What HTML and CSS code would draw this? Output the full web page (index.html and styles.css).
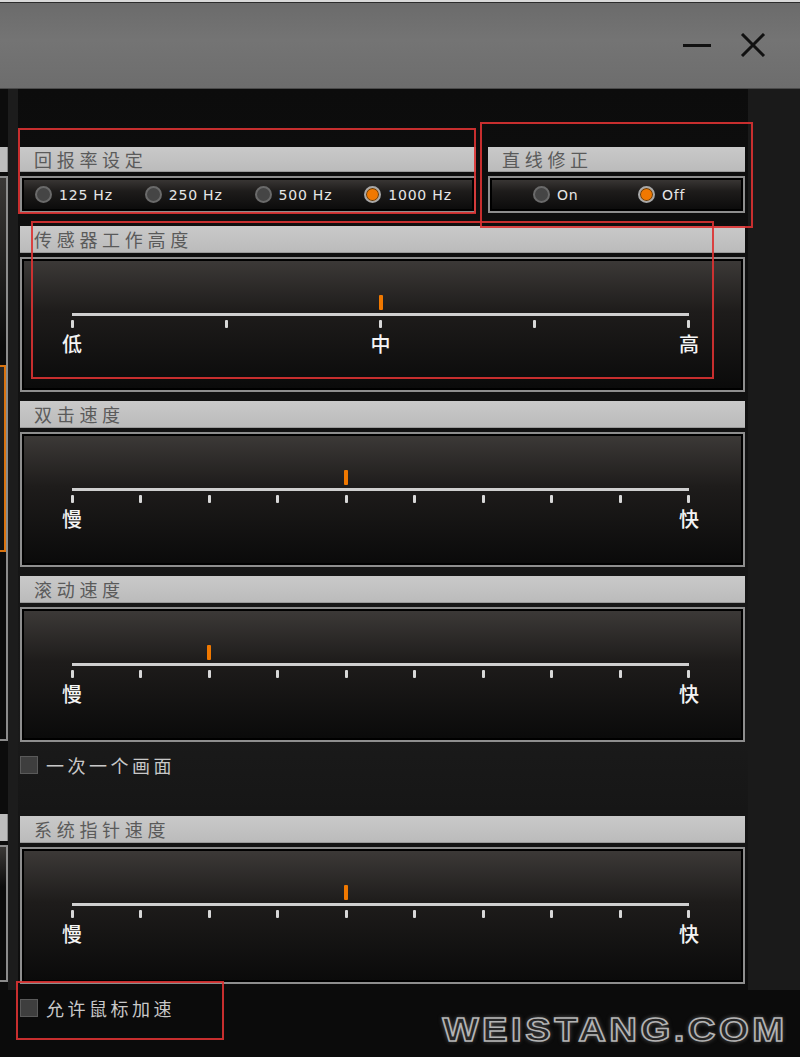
FILE: index.html
```html
<!DOCTYPE html>
<html lang="zh">
<head>
<meta charset="utf-8">
<title>Mouse settings</title>
<link rel="stylesheet" href="styles.css">
</head>
<body>
<div class="titlebar">
  <svg class="btn-min" width="28" height="4" viewBox="0 0 28 4"><rect x="0" y="0" width="28" height="3" fill="#111"/></svg>
  <svg class="btn-close" width="26" height="24" viewBox="0 0 26 24"><path d="M2 1 L24 23 M24 1 L2 23" stroke="#111" stroke-width="3" fill="none"/></svg>
</div>

<div class="main">
  <div class="leftcol">
    <div class="lc-hd"></div>
    <div class="lc-body">
      <div class="lc-sel"></div>
    </div>
    <div class="lc-hd lc-hd2"></div>
    <div class="lc-body lc-body2"></div>
  </div>
  <div class="divider"></div>
  <div class="content">
    <div class="row1">
      <div class="panel panel-rate">
        <div class="hd hd-short">回报率设定</div>
        <div class="bd bd-radio">
          <label class="radio"><span class="dot"></span>125 Hz</label>
          <label class="radio"><span class="dot"></span>250 Hz</label>
          <label class="radio"><span class="dot"></span>500 Hz</label>
          <label class="radio"><span class="dot on"></span>1000 Hz</label>
        </div>
      </div>
      <div class="panel panel-line">
        <div class="hd hd-short">直线修正</div>
        <div class="bd bd-radio bd-radio2">
          <label class="radio"><span class="dot"></span>On</label>
          <label class="radio"><span class="dot on"></span>Off</label>
        </div>
      </div>
    </div>

    <div class="panel panel-sensor">
      <div class="hd">传感器工作高度</div>
      <div class="bd bd-slider">
        <div class="slider">
          <div class="marker-row"><span class="marker" style="left:50%"></span></div>
          <div class="track"></div>
          <div class="ticks"><i></i><i></i><i></i><i></i><i></i></div>
          <div class="labels"><span>低</span><span>中</span><span>高</span></div>
        </div>
      </div>
    </div>

    <div class="panel panel-next">
      <div class="hd">双击速度</div>
      <div class="bd bd-slider">
        <div class="slider">
          <div class="marker-row"><span class="marker" style="left:44.44%"></span></div>
          <div class="track"></div>
          <div class="ticks"><i></i><i></i><i></i><i></i><i></i><i></i><i></i><i></i><i></i><i></i></div>
          <div class="labels"><span>慢</span><span>快</span></div>
        </div>
      </div>
    </div>

    <div class="panel panel-next">
      <div class="hd">滚动速度</div>
      <div class="bd bd-slider">
        <div class="slider">
          <div class="marker-row"><span class="marker" style="left:22.22%"></span></div>
          <div class="track"></div>
          <div class="ticks"><i></i><i></i><i></i><i></i><i></i><i></i><i></i><i></i><i></i><i></i></div>
          <div class="labels"><span>慢</span><span>快</span></div>
        </div>
      </div>
    </div>

    <label class="check check-page"><span class="box"></span>一次一个画面</label>

    <div class="panel panel-sys">
      <div class="hd">系统指针速度</div>
      <div class="bd bd-slider">
        <div class="slider">
          <div class="marker-row"><span class="marker" style="left:44.44%"></span></div>
          <div class="track"></div>
          <div class="ticks"><i></i><i></i><i></i><i></i><i></i><i></i><i></i><i></i><i></i><i></i></div>
          <div class="labels"><span>慢</span><span>快</span></div>
        </div>
      </div>
    </div>
  </div>
  <div class="rightstrip"></div>
</div>

<div class="footer">
  <label class="check check-accel"><span class="box"></span>允许鼠标加速</label>
  <div class="logo">WEISTANG.COM</div>
</div>

<div class="mark mark1"></div>
<div class="mark mark2"></div>
<div class="mark mark3"></div>
<div class="mark mark4"></div>
</body>
</html>
```

FILE: styles.css
```css
* { box-sizing: border-box; }
body {
  margin: 0;
  width: 800px;
  height: 1057px;
  overflow: hidden;
  position: relative;
  background: #0c0c0c;
  font-family: "Noto Sans CJK SC", "Noto Sans", sans-serif;
}

/* title bar */
.titlebar {
  height: 89px;
  border-top: 2px solid #d8d8d8;
  border-bottom: 1px solid #4a4a4a;
  box-shadow: inset 0 1px 0 #2c2c2c;
  background: linear-gradient(#6b6b6b, #747474 45%, #6d6d6d);
  display: flex;
  justify-content: flex-end;
  align-items: center;
  gap: 29px;
  padding-right: 34px;
}
.btn-min { margin-top: 2px; }

/* main area */
.main {
  display: flex;
  height: 901px;
}
.leftcol {
  width: 8px;
  padding-top: 58px;
  display: flex;
  flex-direction: column;
}
.lc-hd {
  height: 25px;
  background: #bdbdbd;
  border-right: 1px solid #8a8a8a;
}
.lc-body {
  margin-top: 4px;
  height: 565px;
  border: 2px solid #8c8c8c;
  border-left: none;
  background: linear-gradient(#3a3836, #0c0c0c 30%, #0c0c0c);
  padding-top: 187px;
}
.lc-sel {
  height: 187px;
  border: 2px solid #d9730f;
  border-left: none;
  background: linear-gradient(#2a2826, #0f0f0f);
}
.lc-hd2 { margin-top: 73px; height: 27px; }
.lc-body2 { height: 137px; padding-top: 0; }

.divider {
  width: 10px;
  background: #1c1c1c;
}
.content {
  width: 730px;
  padding: 58px 3px 0 2px;
  background: linear-gradient(#0c0c0c, #121212 40%, #1a1a1a 72%, #0c0c0c 100%);
}
.rightstrip {
  flex: 1;
  background: #1a1a1a;
}

/* panels */
.row1 {
  display: flex;
  gap: 12px;
}
.panel-rate { width: 456px; }
.panel-line { width: 257px; }
.hd {
  height: 27px;
  line-height: 27px;
  padding-left: 14px;
  background: linear-gradient(#c9c9c9, #bbbbbb);
  border-bottom: 1px solid #9a9a9a;
  color: #5a5a5a;
  font-size: 18px;
  letter-spacing: 4.7px;
  white-space: nowrap;
}
.hd-short { height: 25px; line-height: 25px; }
.bd {
  margin-top: 4px;
  border: 2px solid #8e8e8e;
  box-shadow: inset 0 0 0 2px #000;
  background: linear-gradient(#3d3a38, #1e1c1b 40%, #0a0a0a);
}
.bd-radio {
  height: 37px;
  display: flex;
  align-items: center;
  padding-left: 13px;
}
.bd-radio2 { padding-left: 43px; }
.radio {
  width: 114px;
  display: flex;
  align-items: center;
  gap: 7px;
  color: #e6e6e6;
  font-family: "DejaVu Sans", sans-serif;
  font-size: 14px;
  letter-spacing: 0.8px;
}
.bd-radio2 .radio { width: 112px; }
.dot {
  width: 17px;
  height: 17px;
  border-radius: 50%;
  background: #454545;
  border: 2px solid #6a6a6a;
  flex: none;
}
.dot.on {
  background: #f07800;
  border-color: #a8a8a8;
  box-shadow: inset 0 0 0 1px #5a3a10;
}

.panel-sensor { margin-top: 13px; }
.panel-next { margin-top: 9px; }
.panel-sys { margin-top: 41px; }
.bd-slider {
  height: 135px;
  padding: 36px 0 0 50px;
}
.panel-sys .bd-slider { height: 137px; }

/* slider */
.slider { width: 617px; }
.marker-row {
  position: relative;
  height: 15px;
}
.marker {
  position: absolute;
  top: 0;
  width: 4px;
  height: 15px;
  margin-left: -2px;
  background: #f07800;
  border-radius: 1px;
}
.track {
  margin-top: 3px;
  height: 3px;
  background: #cfcfcf;
}
.ticks {
  margin: 4px -1px 0;
  display: flex;
  justify-content: space-between;
  height: 8px;
}
.ticks i {
  width: 3px;
  height: 8px;
  background: #d8d8d8;
  border-radius: 1px;
}
.labels {
  margin: 4px -10px 0;
  display: flex;
  justify-content: space-between;
}
.labels span {
  width: 20px;
  text-align: center;
  color: #f4f4f4;
  font-size: 20px;
  line-height: 24px;
  font-weight: 500;
}

/* checkboxes */
.check {
  display: flex;
  align-items: center;
  gap: 8px;
  color: #c8c8c8;
  font-size: 18px;
  letter-spacing: 3.5px;
  height: 20px;
}
.check-page { margin-top: 13px; }
.box {
  width: 18px;
  height: 18px;
  background: #3e3e3e;
  border: 1px solid #5a5a5a;
  flex: none;
}

/* footer */
.footer {
  height: 67px;
  background: #0b0b0b;
  display: flex;
  align-items: flex-start;
  padding-left: 20px;
}
.check-accel { margin-top: 8px; }
.logo {
  margin-left: auto;
  margin-right: 12px;
  margin-top: 22px;
  font-family: "Liberation Sans", sans-serif;
  font-weight: bold;
  font-size: 33px;
  line-height: 36px;
  letter-spacing: 3px;
  color: #262626;
  -webkit-text-stroke: 1.5px #b4b4b4;
  text-shadow: 0 0 5px rgba(190, 190, 190, 0.55);
  transform: scaleX(1.16);
  transform-origin: right center;
}

/* red annotation boxes */
.mark {
  position: absolute;
  border: 2px solid rgba(220, 50, 50, 0.9);
  pointer-events: none;
}
.mark1 { left: 18px; top: 128px; width: 458px; height: 86px; }
.mark2 { left: 480px; top: 122px; width: 273px; height: 106px; }
.mark3 { left: 31px; top: 221px; width: 683px; height: 158px; }
.mark4 { left: 16px; top: 981px; width: 208px; height: 59px; }
```
